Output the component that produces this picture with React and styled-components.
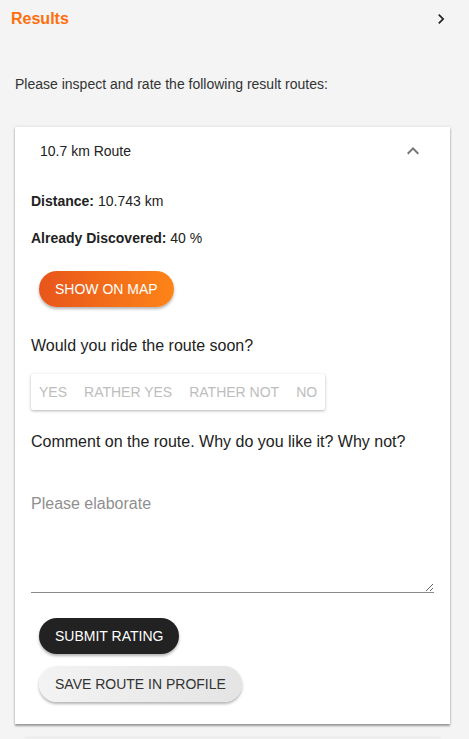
import React from "react";
import styled, { createGlobalStyle } from "styled-components";

const GlobalStyle = createGlobalStyle`
  body {
    margin: 0;
    background: #f4f4f4;
    font-family: "Liberation Sans", Arial, sans-serif;
    color: #222;
  }
`;

const answers = ["Yes", "Rather yes", "Rather not", "No"];

const App = () => {
  return (
    <>
      <GlobalStyle />
      <Page>
        <Header>
          <Title>Results</Title>
          <svg width="20" height="20" viewBox="0 0 24 24">
            <path d="M10 6L8.59 7.41 13.17 12l-4.58 4.59L10 18l6-6z" fill="#222" />
          </svg>
        </Header>

        <Intro>Please inspect and rate the following result routes:</Intro>

        <Card>
          <CardHeader>
            <span>10.7 km Route</span>
            <svg width="24" height="24" viewBox="0 0 24 24">
              <path d="M12 8l-6 6 1.41 1.41L12 10.83l4.59 4.58L18 14z" fill="#757575" />
            </svg>
          </CardHeader>

          <CardBody>
            <Fact>
              <b>Distance:</b> 10.743 km
            </Fact>
            <Fact $gap={17}>
              <b>Already Discovered:</b> 40 %
            </Fact>

            <PillButton $variant="orange" $top={23}>Show on map</PillButton>

            <Question $top={27}>Would you ride the route soon?</Question>
            <ToggleGroup>
              {answers.map((a) => (
                <Toggle key={a}>{a}</Toggle>
              ))}
            </ToggleGroup>

            <Question $top={20}>Comment on the route. Why do you like it? Why not?</Question>
            <Comment placeholder="Please elaborate" />

            <PillButton $variant="dark" $top={25}>Submit rating</PillButton>
            <PillButton $variant="light" $top={12}>Save route in profile</PillButton>
          </CardBody>
        </Card>

        <NextCard />
      </Page>
    </>
  );
};

const Page = styled.div`
  width: 469px;
  min-height: 739px;
  overflow: hidden;
`;

const Header = styled.div`
  height: 37px;
  padding: 0 18px 0 11px;
  display: flex;
  align-items: center;
  justify-content: space-between;
`;

const Title = styled.h2`
  margin: 0;
  font-size: 16px;
  font-weight: bold;
  color: #ff6e0c;
`;

const Intro = styled.p`
  margin: 37px 0 0 15px;
  font-size: 14px;
  line-height: 20px;
  color: #333;
`;

const Card = styled.div`
  margin: 33px 19px 0 15px;
  background: #fff;
  box-shadow: 0 2px 2px rgba(0, 0, 0, 0.35), 0 0 3px rgba(0, 0, 0, 0.12);
  padding-bottom: 22px;
`;

const CardHeader = styled.div`
  height: 48px;
  padding: 0 25px;
  display: flex;
  align-items: center;
  justify-content: space-between;
  font-size: 14px;
  color: #222;
`;

const CardBody = styled.div`
  padding: 0 16px;
  display: flex;
  flex-direction: column;
  align-items: flex-start;
`;

const Fact = styled.div`
  margin-top: ${(p) => p.$gap || 16}px;
  font-size: 14px;
  line-height: 20px;
  color: #222;

  b {
    font-weight: bold;
  }
`;

const variants = {
  orange: "color: #fff; background: linear-gradient(90deg, #e8551b, #fd8418);",
  dark: "color: #fff; background: #222;",
  light: "color: #333; background: linear-gradient(90deg, #f3f3f3, #e4e4e4);",
};

const PillButton = styled.button`
  margin: ${(p) => p.$top}px 0 0 8px;
  height: 36px;
  padding: 0 16px;
  border: none;
  border-radius: 18px;
  font-family: inherit;
  font-size: 14px;
  font-weight: 500;
  text-transform: uppercase;
  box-shadow: 0 2px 3px rgba(0, 0, 0, 0.3);
  ${(p) => variants[p.$variant]}
`;

const Question = styled.p`
  margin: ${(p) => p.$top}px 0 0;
  font-size: 16px;
  line-height: 24px;
  color: #222;
`;

const ToggleGroup = styled.div`
  margin-top: 16px;
  height: 36px;
  display: flex;
  background: #fff;
  border-radius: 2px;
  box-shadow: 0 1px 3px rgba(0, 0, 0, 0.3);
`;

const Toggle = styled.button`
  height: 36px;
  padding: 0 8px;
  border: none;
  background: transparent;
  font-family: inherit;
  font-size: 14px;
  color: #bdbdbd;
  text-transform: uppercase;

  & + & {
    margin-left: 1px;
  }
`;

const Comment = styled.textarea`
  box-sizing: border-box;
  margin-top: 24px;
  width: 403px;
  height: 115px;
  padding: 14px 0 0;
  border: none;
  border-bottom: 1px solid #8a8a8a;
  outline: none;
  font-family: inherit;
  font-size: 16px;
  line-height: 24px;
  color: #222;

  &::placeholder {
    color: #8f8f8f;
  }
`;

const NextCard = styled.div`
  margin: 14px 29px 0 25px;
  height: 20px;
  background: #f1f1f1;
  box-shadow: 0 -1px 2px rgba(0, 0, 0, 0.06);
`;

export default App;
